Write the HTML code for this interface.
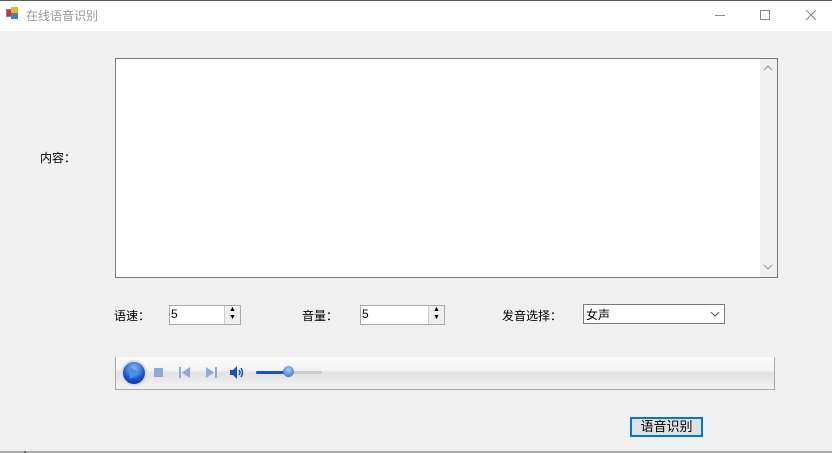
<!DOCTYPE html>
<html><head><meta charset="utf-8"><style>
*{margin:0;padding:0;box-sizing:border-box}
body{width:832px;height:453px;background:#f0f0f0;position:relative;overflow:hidden;font-family:"Liberation Sans","Noto Sans CJK SC",sans-serif;font-size:12px;color:#000}
.a{position:absolute}
</style></head><body>
<div class="a" style="left:0;top:0;width:832px;height:31px;background:#fff;border-top:1px solid #555a6a"></div>
<div class="a" style="left:6px;top:9px;width:8px;height:8px;background:#c33;border:1px solid #888"></div>
<div class="a" style="left:11px;top:7px;width:7px;height:7px;background:#e8b820"></div>
<div class="a" style="left:11px;top:13px;width:7px;height:6px;background:#3a7ad8"></div>
<div class="a" style="left:26px;top:7px;color:#999;font-size:12px">在线语音识别</div>
<div class="a" style="left:715px;top:15px;width:10px;height:1px;background:#888"></div>
<div class="a" style="left:760px;top:10px;width:10px;height:10px;border:1px solid #888"></div>
<svg class="a" style="left:805px;top:9px" width="12" height="12"><path d="M1 1L11 11M11 1L1 11" stroke="#888" stroke-width="1"/></svg>

<div class="a" style="left:40px;top:149px">内容：</div>
<div class="a" style="left:115px;top:58px;width:663px;height:220px;background:#fff;border:1px solid #7a7a7a"></div>
<div class="a" style="left:760px;top:59px;width:17px;height:218px;background:#f0f0f0"></div>
<svg class="a" style="left:763px;top:64px" width="10" height="8"><path d="M1 6L5 2L9 6" stroke="#aaa" fill="none" stroke-width="1.5"/></svg>
<svg class="a" style="left:763px;top:263px" width="10" height="8"><path d="M1 2L5 6L9 2" stroke="#aaa" fill="none" stroke-width="1.5"/></svg>

<div class="a" style="left:114px;top:307px">语速：</div>
<div class="a" style="left:169px;top:305px;width:72px;height:20px;background:#fff;border:1px solid #aaa;padding:1px 0 0 1px">5</div>
<div class="a" style="left:224px;top:306px;width:16px;height:18px;background:#eee;border-left:1px solid #ccc"><div style="font-size:7px;line-height:8px;text-align:center">▲<br>▼</div></div>
<div class="a" style="left:302px;top:307px">音量：</div>
<div class="a" style="left:360px;top:305px;width:85px;height:20px;background:#fff;border:1px solid #aaa;padding:1px 0 0 1px">5</div>
<div class="a" style="left:428px;top:306px;width:16px;height:18px;background:#eee;border-left:1px solid #ccc"><div style="font-size:7px;line-height:8px;text-align:center">▲<br>▼</div></div>
<div class="a" style="left:502px;top:307px">发音选择：</div>
<div class="a" style="left:583px;top:304px;width:142px;height:20px;background:#fff;border:1px solid #7a7a7a;padding:1px 0 0 2px">女声</div>
<svg class="a" style="left:710px;top:311px" width="10" height="7"><path d="M1 1L5 5L9 1" stroke="#555" fill="none"/></svg>

<div class="a" style="left:115px;top:357px;width:660px;height:33px;border:1px solid #aaa;border-top:none;background:linear-gradient(#fafafa,#f4f4f4 40%,#e2e2e2 50%,#f2f2f2)"></div>
<div class="a" style="left:121px;top:360px;width:26px;height:26px;border-radius:50%;background:radial-gradient(circle at 50% 30%,#8ac0ff,#1a4fc8 60%,#0a2a8a);border:2px solid #ddd"></div>
<svg class="a" style="left:129px;top:366px" width="12" height="14"><path d="M1 1L11 7L1 13Z" fill="#4a90e8"/></svg>
<div class="a" style="left:154px;top:368px;width:9px;height:9px;background:#8fa8d8"></div>
<svg class="a" style="left:179px;top:367px" width="12" height="11"><rect x="0" y="0" width="2" height="11" fill="#8fa8d8"/><path d="M11 0L3 5.5L11 11Z" fill="#8fa8d8"/></svg>
<svg class="a" style="left:205px;top:367px" width="12" height="11"><rect x="10" y="0" width="2" height="11" fill="#8fa8d8"/><path d="M1 0L9 5.5L1 11Z" fill="#8fa8d8"/></svg>
<svg class="a" style="left:230px;top:366px" width="16" height="13"><path d="M0 4H3L7 0V13L3 9H0Z" fill="#1a50c8"/><path d="M9 4Q11 6.5 9 9M11 2Q14 6.5 11 11" stroke="#1a50c8" fill="none" stroke-width="1.5"/></svg>
<div class="a" style="left:256px;top:371px;width:66px;height:3px;background:#ccc;border-radius:2px"></div>
<div class="a" style="left:256px;top:371px;width:32px;height:3px;background:#1a50c8;border-radius:2px"></div>
<div class="a" style="left:283px;top:366px;width:11px;height:11px;border-radius:50%;background:radial-gradient(circle at 50% 35%,#aad0ff,#2a60c8)"></div>

<div class="a" style="left:630px;top:417px;width:73px;height:20px;border:2px solid #0078d7;background:#e1e1e1;text-align:center;line-height:15px;font-size:13px">语音识别</div>
<div class="a" style="left:0;top:451px;width:832px;height:2px;background:#aaa"></div>
<div class="a" style="left:24px;top:451px;width:2px;height:2px;background:#666"></div>
</body></html>
